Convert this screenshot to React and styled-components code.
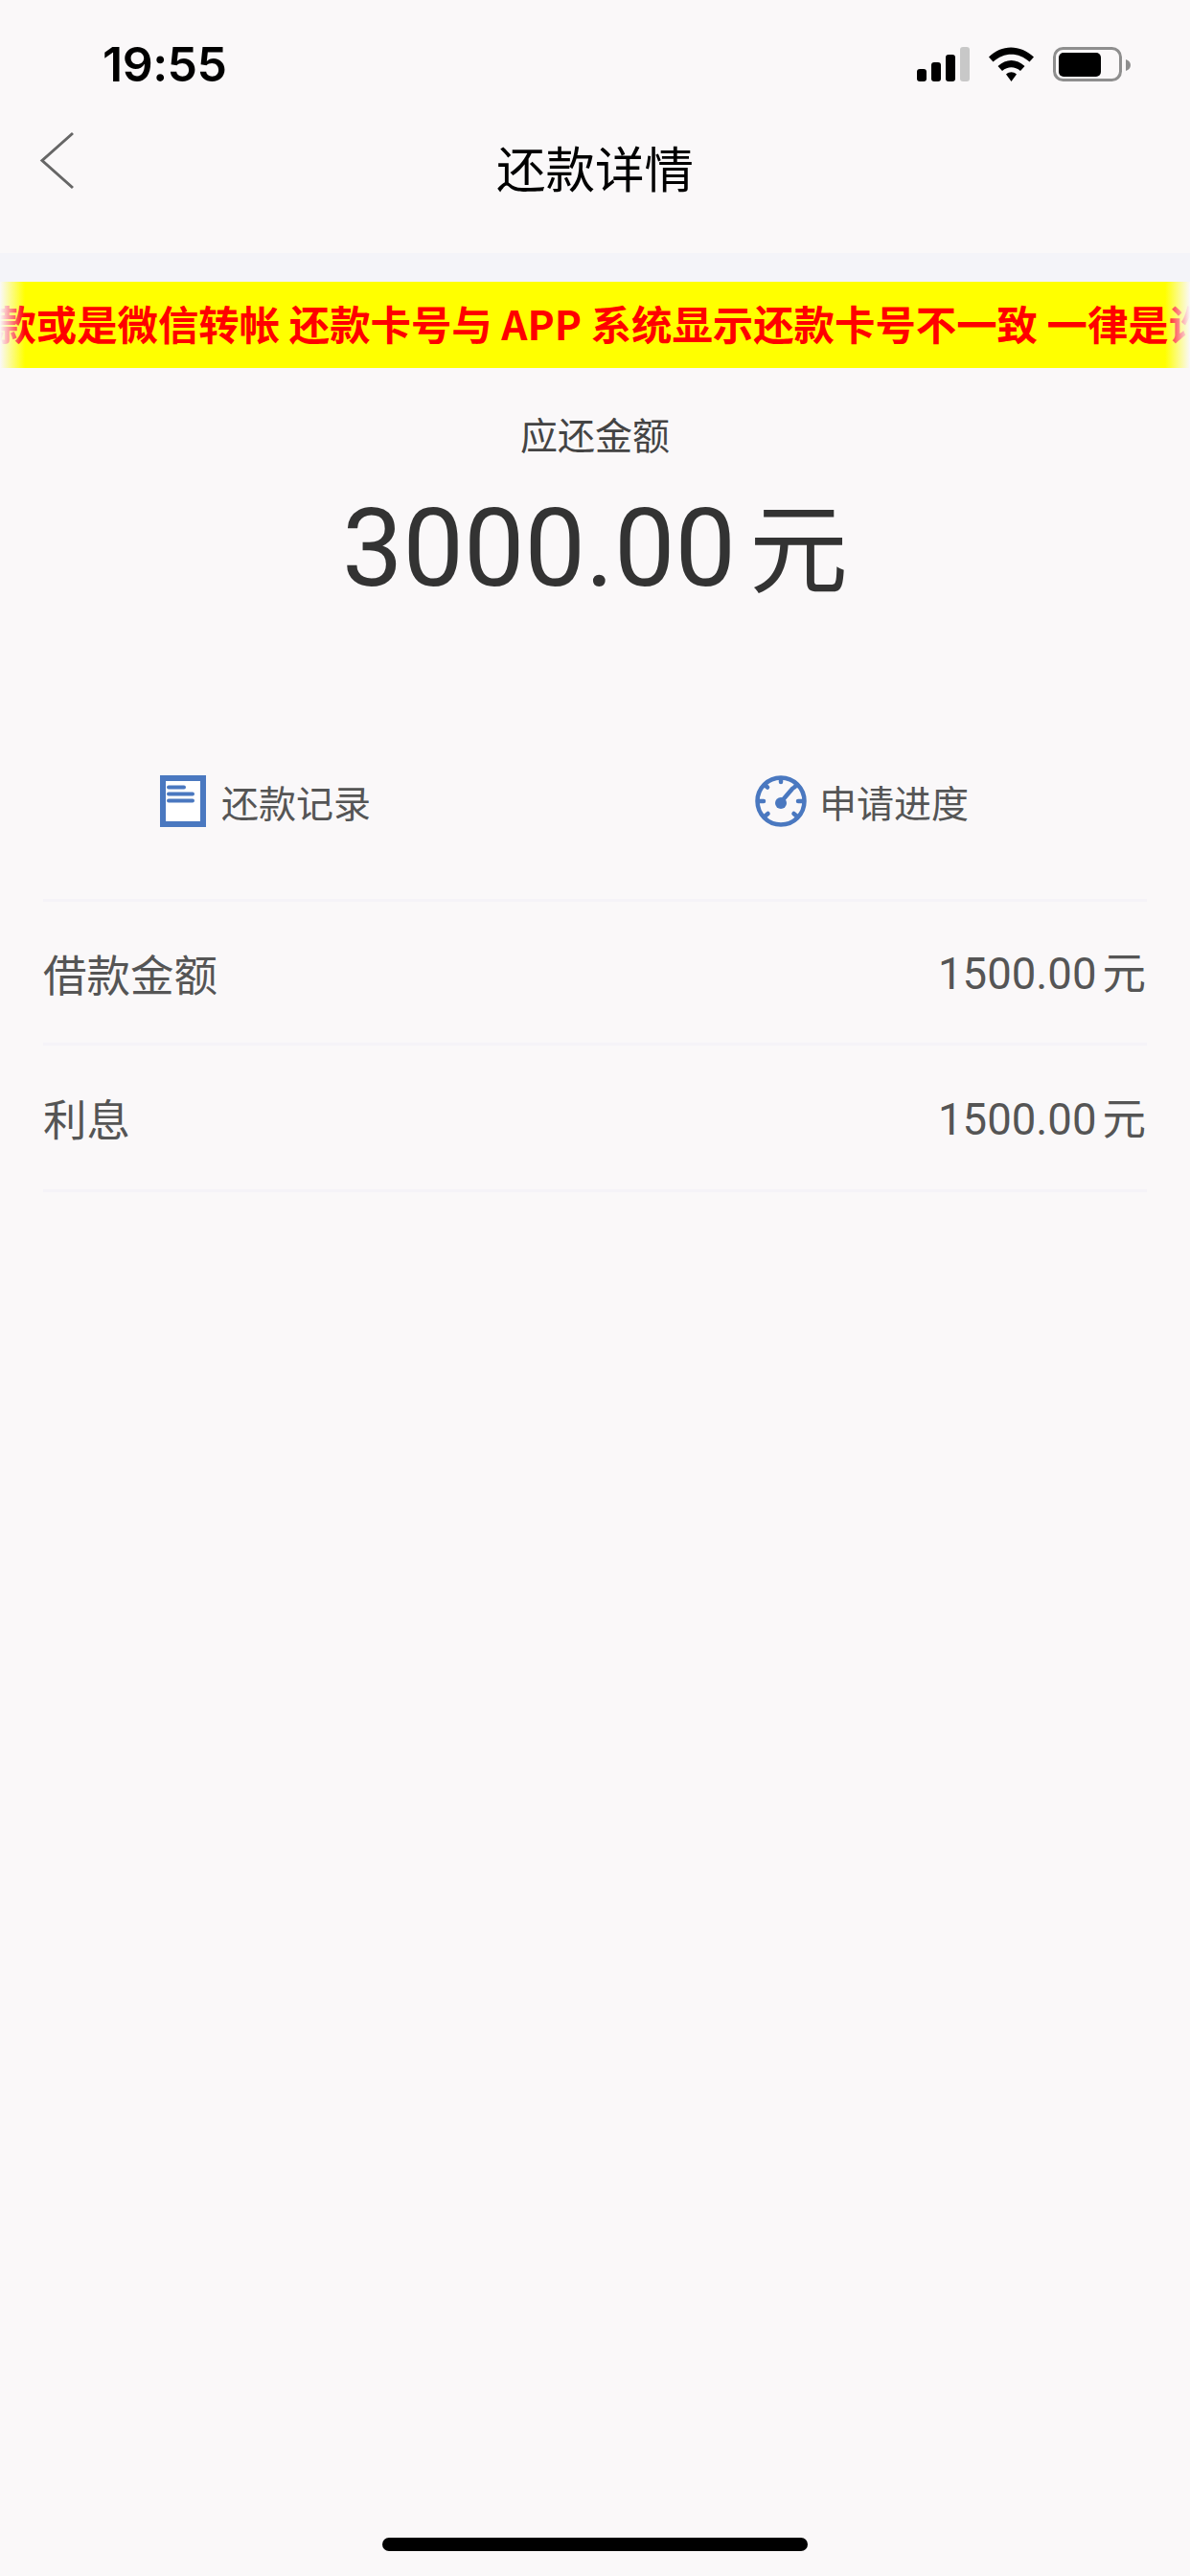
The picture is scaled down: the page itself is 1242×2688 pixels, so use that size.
import React from 'react';
import styled, { createGlobalStyle } from 'styled-components';

const GlobalStyle = createGlobalStyle`
  html, body {
    margin: 0;
    padding: 0;
    background: #faf8f9;
  }
  * {
    box-sizing: border-box;
  }
`;

const CJK = `"Noto Sans CJK SC", "Noto Sans", sans-serif`;
const LATIN = `Roboto, "Noto Sans CJK SC", sans-serif`;

const Page = styled.div`
  width: 1242px;
  height: 2688px;
  display: flex;
  flex-direction: column;
  background: #faf8f9;
  overflow: hidden;
`;

const StatusBar = styled.div`
  height: 88px;
  padding: 48px 62px 0 107px;
  display: flex;
  justify-content: space-between;
  align-items: flex-start;
`;

const Time = styled.span`
  margin-top: 1px;
  font-family: Inter, sans-serif;
  font-size: 50px;
  font-weight: 600;
  line-height: 37px;
  letter-spacing: -0.5px;
  color: #000;
`;

const StatusIcons = styled.svg`
  display: block;
`;

const BatteryCap = styled.svg`
  display: block;
  margin: 14px 0 0 3px;
`;

const StatusRight = styled.div`
  display: flex;
  align-items: flex-start;
`;

const Nav = styled.header`
  position: relative;
  height: 176px;
  padding-bottom: 5px;
  display: flex;
  align-items: center;
  justify-content: center;
`;

const BackIcon = styled.svg`
  position: absolute;
  left: 40px;
  top: 49px;
`;

const Title = styled.h1`
  margin: 0;
  font-family: ${CJK};
  font-size: 51.5px;
  font-weight: 400;
  line-height: 60px;
  color: #000;
`;

const Band = styled.div`
  height: 30px;
  background: #f4f4f9;
`;

const Marquee = styled.div`
  position: relative;
  height: 90px;
  padding-bottom: 5px;
  background: #ffff00;
  overflow: hidden;
  display: flex;
  align-items: center;

  &::before,
  &::after {
    content: '';
    position: absolute;
    top: 0;
    bottom: 0;
    width: 26px;
    z-index: 1;
  }
  &::before {
    left: 0;
    background: linear-gradient(to right, #faf8f9, rgba(250, 248, 249, 0));
  }
  &::after {
    right: 0;
    background: linear-gradient(to left, #faf8f9, rgba(250, 248, 249, 0));
  }
`;

const MarqueeText = styled.span`
  flex: none;
  margin-left: -47px;
  font-family: ${CJK};
  font-size: 42.4px;
  font-weight: 700;
  line-height: 50px;
  white-space: pre;
  color: #ff0000;
`;

const Summary = styled.section`
  padding-top: 44px;
  display: flex;
  flex-direction: column;
  align-items: center;
`;

const SummaryLabel = styled.div`
  font-family: ${CJK};
  font-size: 39px;
  line-height: 48px;
  color: #444;
`;

const SummaryAmount = styled.div`
  margin-top: 26px;
  font-family: ${LATIN};
  font-size: 113px;
  line-height: 130px;
  color: #333;
`;

const AmountUnit = styled.span`
  margin-left: 14px;
  font-family: ${CJK};
  font-size: 103px;
`;

const Actions = styled.div`
  margin-top: 142px;
  height: 112px;
  display: grid;
  grid-template-columns: 621px 621px;
  align-items: center;
`;

const Action = styled.div`
  display: flex;
  align-items: center;
  gap: ${(props) => props.$gap}px;
  padding-left: ${(props) => props.$left}px;
`;

const ActionLabel = styled.span`
  font-family: ${CJK};
  font-size: 39px;
  line-height: 48px;
  color: #555;
`;

const Details = styled.section`
  margin-top: 46px;
  padding: 0 45px;
`;

const Row = styled.div`
  height: 153px;
  display: flex;
  align-items: center;
  justify-content: space-between;
  border-bottom: 3px solid #f5f3f8;
  &:first-child {
    border-top: 3px solid #f5f3f8;
  }
`;

const RowLabel = styled.span`
  font-family: ${CJK};
  font-size: 45.5px;
  line-height: 54px;
  color: #555;
`;

const RowValue = styled.span`
  margin-right: 1px;
  font-family: ${LATIN};
  font-size: 45.5px;
  line-height: 54px;
  color: #555;
`;

const RowUnit = styled.span`
  margin-left: 6px;
  font-family: ${CJK};
`;

const HomeBar = styled.div`
  width: 444px;
  height: 14px;
  margin: auto auto 26px;
  border-radius: 7px;
  background: #000;
`;

const SignalWifiBattery = () => (
  <StatusIcons width="216" height="38" viewBox="0 0 216 38">
    <rect x="1" y="24" width="10" height="13" rx="3" fill="#000" />
    <rect x="16" y="17" width="10" height="20" rx="3" fill="#000" />
    <rect x="31" y="9" width="10" height="28" rx="3" fill="#000" />
    <rect x="46" y="1" width="10" height="36" rx="3" fill="#c8c8c8" />
    <path d="M76 11.5 C89 -2 109 -2 123 11.5 L118.5 16.5 C107 6 92 6 80.5 16.5 Z" fill="#000" />
    <path d="M85.5 21 C94 13 105 13 113.5 21 L109 26 C103 21 96 21 90 26 Z" fill="#000" />
    <path d="M94 29.5 C97.5 26.5 101.5 26.5 105 29.5 L99.5 37 Z" fill="#000" />
    <rect x="144.5" y="2.5" width="69" height="33" rx="9" fill="none" stroke="#8e8e8e" strokeWidth="3" />
    <rect x="149" y="7" width="44" height="25" rx="5" fill="#000" />
  </StatusIcons>
);

const RecordIcon = () => (
  <svg width="48" height="54" viewBox="0 0 48 54">
    <rect x="3" y="3" width="42" height="48" fill="#fff" stroke="#4a78c0" strokeWidth="6" />
    <g stroke="#4a78c0" strokeWidth="4" strokeLinecap="round">
      <line x1="9" y1="12.5" x2="25" y2="12.5" />
      <line x1="9" y1="19.5" x2="34" y2="19.5" />
      <line x1="9" y1="26.5" x2="34" y2="26.5" />
    </g>
  </svg>
);

const ProgressIcon = () => (
  <svg width="54" height="54" viewBox="0 0 54 54">
    <circle cx="27" cy="27" r="24.5" fill="none" stroke="#4a78c0" strokeWidth="4.5" />
    <g stroke="#4a78c0" strokeWidth="4.5" strokeLinecap="round">
      <line x1="27" y1="4" x2="27" y2="7" />
      <line x1="4" y1="27" x2="9" y2="27" />
      <line x1="45" y1="27" x2="50" y2="27" />
      <line x1="10" y1="10" x2="13" y2="12.5" />
      <line x1="44" y1="10" x2="41" y2="12.5" />
      <line x1="10" y1="43" x2="13.5" y2="40" />
      <line x1="44" y1="43" x2="40.5" y2="40" />
      <line x1="27" y1="28" x2="39" y2="14" />
    </g>
    <circle cx="27" cy="29" r="6" fill="#4a78c0" />
  </svg>
);

export default function App() {
  return (
    <Page>
      <GlobalStyle />
      <StatusBar>
        <Time>19:55</Time>
        <StatusRight>
          <SignalWifiBattery />
          <BatteryCap width="5" height="12" viewBox="0 0 5 12">
            <path d="M0 0 C3 1 5 3 5 6 C5 9 3 11 0 12 Z" fill="#8e8e8e" />
          </BatteryCap>
        </StatusRight>
      </StatusBar>
      <Nav>
        <BackIcon width="40" height="64" viewBox="0 0 40 64">
          <path d="M36 2 L4 30.5 L36 59" fill="none" stroke="#666" strokeWidth="3" />
        </BackIcon>
        <Title>还款详情</Title>
      </Nav>
      <Band />
      <Marquee>
        <MarqueeText>还款或是微信转帐 还款卡号与 APP 系统显示还款卡号不一致 一律是诈骗</MarqueeText>
      </Marquee>
      <Summary>
        <SummaryLabel>应还金额</SummaryLabel>
        <SummaryAmount>
          3000.00<AmountUnit>元</AmountUnit>
        </SummaryAmount>
      </Summary>
      <Actions>
        <Action $left={167} $gap={16}>
          <RecordIcon />
          <ActionLabel>还款记录</ActionLabel>
        </Action>
        <Action $left={167} $gap={13}>
          <ProgressIcon />
          <ActionLabel>申请进度</ActionLabel>
        </Action>
      </Actions>
      <Details>
        <Row>
          <RowLabel>借款金额</RowLabel>
          <RowValue>
            1500.00<RowUnit>元</RowUnit>
          </RowValue>
        </Row>
        <Row>
          <RowLabel>利息</RowLabel>
          <RowValue>
            1500.00<RowUnit>元</RowUnit>
          </RowValue>
        </Row>
      </Details>
      <HomeBar />
    </Page>
  );
}
